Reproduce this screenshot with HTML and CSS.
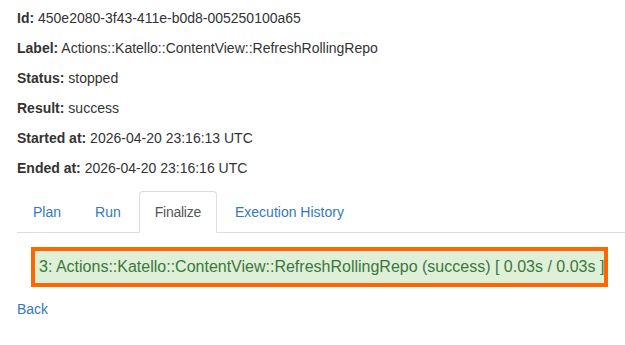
FILE: index.html
```html
<!DOCTYPE html>
<html>
<head>
<meta charset="utf-8">
<link rel="stylesheet" href="styles.css">
</head>
<body>
<div class="page">
  <p class="field"><span class="label">Id:</span> 450e2080-3f43-411e-b0d8-005250100a65</p>
  <p class="field"><span class="label">Label:</span> Actions::Katello::ContentView::RefreshRollingRepo</p>
  <p class="field"><span class="label">Status:</span> stopped</p>
  <p class="field"><span class="label">Result:</span> success</p>
  <p class="field"><span class="label">Started at:</span> 2026-04-20 23:16:13 UTC</p>
  <p class="field"><span class="label">Ended at:</span> 2026-04-20 23:16:16 UTC</p>
  <ul class="tabs">
    <li class="tab"><a href="#">Plan</a></li>
    <li class="tab"><a href="#">Run</a></li>
    <li class="tab active"><a href="#">Finalize</a></li>
    <li class="tab"><a href="#">Execution History</a></li>
  </ul>
  <div class="tab-content">
    <div class="step success">3: Actions::Katello::ContentView::RefreshRollingRepo (success) [ 0.03s / 0.03s ]</div>
  </div>
  <a class="back" href="#">Back</a>
</div>
</body>
</html>
```

FILE: styles.css
```css
html, body {
  margin: 0;
  padding: 0;
  background: #fff;
}
body {
  font-family: "Liberation Sans", Arial, Helvetica, sans-serif;
  font-size: 14px;
  line-height: 20px;
  color: #333;
}
.page {
  padding: 8px 17px 0 17px;
}
.field {
  margin: 0 0 10px 0;
}
.label {
  font-weight: bold;
}
.tabs {
  list-style: none;
  margin: 13px -17px 0 0;
  padding: 0;
  display: flex;
  border-bottom: 1px solid #ddd;
}
.tab {
  margin: 0 2px -1px 0;
}
.tab a {
  display: block;
  padding: 10px 15px;
  border: 1px solid transparent;
  border-radius: 4px 4px 0 0;
  color: #337ab7;
  text-decoration: none;
}
.tab.active a {
  color: #555;
  background: #fff;
  border-color: #ddd #ddd transparent #ddd;
  letter-spacing: -0.25px;
}
.tab-content {
  padding: 14px 0 0 14px;
}
.step {
  border: 4px solid #ff6600;
  background: #dff0d8;
  color: #3c763d;
  padding: 5px 4px;
  font-size: 16px;
  line-height: 22px;
  white-space: nowrap;
}
.back {
  display: inline-block;
  margin-top: 12px;
  color: #337ab7;
  text-decoration: none;
}
```
